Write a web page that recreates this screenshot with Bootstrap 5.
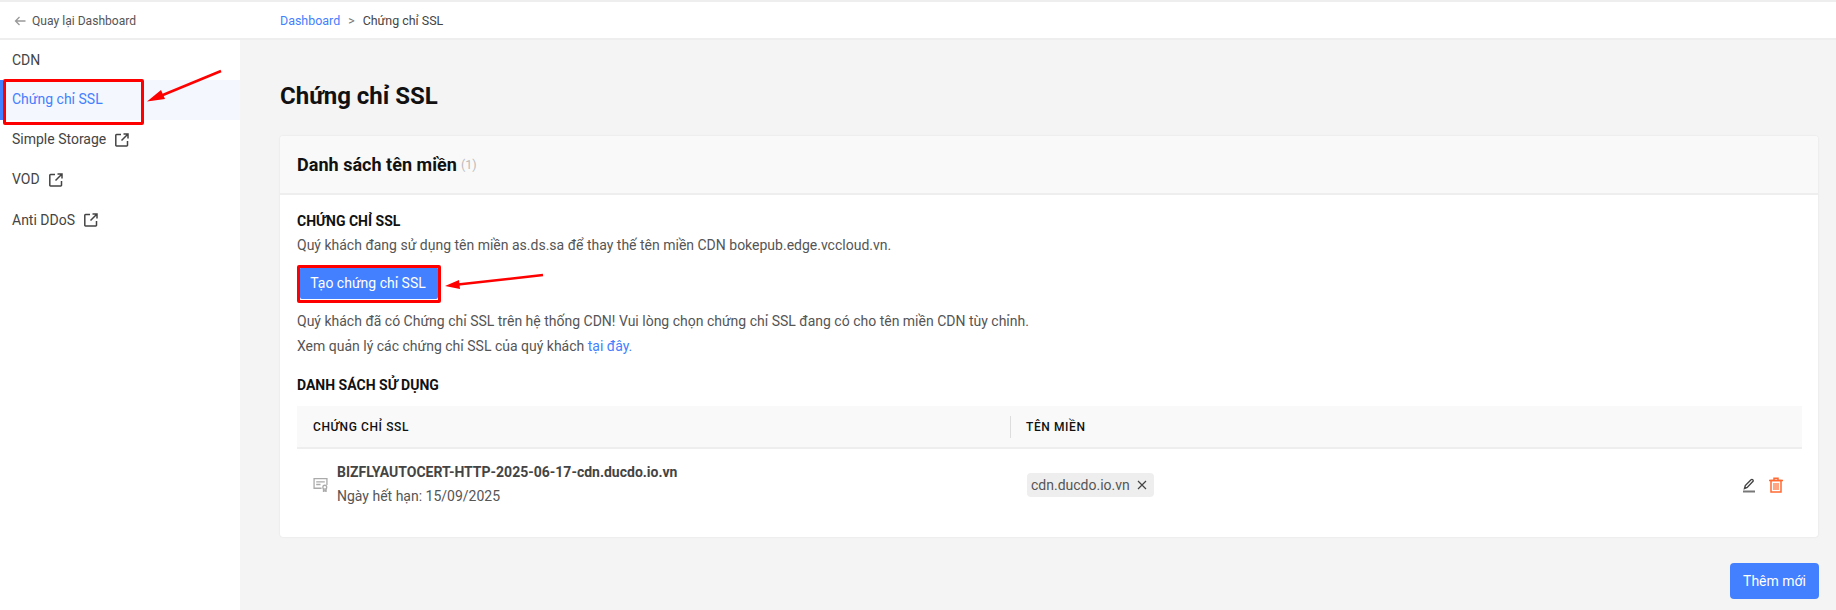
<!DOCTYPE html>
<html lang="vi">
<head>
<meta charset="utf-8">
<title>Chứng chỉ SSL</title>
<link href="https://cdn.jsdelivr.net/npm/bootstrap@5.3.0/dist/css/bootstrap.min.css" rel="stylesheet">
<style>
html,body{height:100%}
body{font-family:Roboto,"Liberation Sans",sans-serif;font-size:14px;color:#444;background:#f4f4f4;overflow:hidden;position:relative}
a{text-decoration:none;color:#4380ff}
.shell{height:610px;border-top:2px solid #eee}
.topbar{height:38px;background:#fff;border-bottom:2px solid #eee;padding-top:2px}
.back-link{width:280px;padding-left:14px;font-size:12.1px;gap:6px}
.crumbs{font-size:12.45px;color:#444;gap:8px}
.crumbs .sep{color:#777}
.side{width:240px;background:#fff;flex:none}
.side-item{height:40px;padding-left:12px;color:#444;font-size:14px;gap:9px}
.side-item.on{background:#f4f7fe;color:#4380ff;border-left:3px solid #4380ff;padding-left:9px}
.side-item span{margin-top:-1px}
.main{flex:1;padding:40px 18px 0 40px;min-width:0}
.page-title{font-size:24px;font-weight:700;color:#111;line-height:32px;margin:0 0 24px}
.panel{background:#fff;border-radius:3px;box-shadow:0 0 2px rgba(0,0,0,.1);height:401px}
.panel-head{height:59px;background:#f9f9f9;border-bottom:2px solid #eee;padding-left:17px;border-radius:3px 3px 0 0}
.panel-head b{font-size:18px;font-weight:700;color:#111;letter-spacing:.03px}
.panel-head span{font-size:12.5px;color:#bbb;margin-left:4px;margin-top:2px}
.panel-body{padding:16px 16px 0 17px}
.sec-title{font-size:14px;font-weight:700;color:#111;line-height:20px;text-transform:uppercase}
.sec-gap{margin-top:17px}
.line{line-height:24px;color:#555;font-size:14px}
.line-first{margin-top:2px}
.cta{background:#4380ff;color:#fff;font-size:14px;height:32px;padding:0 2px 0 0;border:0;border-radius:2px;margin:10px 0 10px 3px;line-height:32px;width:138px}
.cta-wrap{margin:0}
.line-last{margin-top:1px}
.tbl-head{height:43px;background:#f9f9f9;border-bottom:2px solid #eee;margin-top:11px;font-size:12px;font-weight:500;color:#111;letter-spacing:.6px}
.cell-a{width:713px;flex:none;padding-left:16px}
.cell-b{padding-left:15px;border-left:1px solid #ddd;height:22px}
.tbl-row{height:72px}
.cert-cell{width:714px;gap:6px;margin-top:-2px}
.cert-name{font-size:14px;font-weight:700;color:#444;line-height:24px}
.cert-date{line-height:24px;color:#555}
.tag-chip{height:24px;background:#eee;border-radius:4px;padding:0 7px 0 4px;color:#555;font-size:14px;gap:7px;margin-left:16px}
.row-acts{gap:13px;margin-right:19px}
.add-btn{background:#4380ff;color:#fff;width:89px;height:36px;border-radius:4px;font-size:14px;border:0;margin:26px -1px 0 auto;display:block;padding:0}
.mark-box{position:absolute;border:3px solid #f00;border-radius:2px;pointer-events:none}
.mark-a{left:3px;top:79px;width:141px;height:46px}
.mark-b{left:297px;top:265px;width:144px;height:38px}
.mark-svg{position:absolute;left:0;top:0;pointer-events:none}
</style>
</head>
<body>
<div class="shell d-flex flex-column">
  <div class="topbar d-flex align-items-center flex-none">
    <a class="back-link d-flex align-items-center" href="#">
      <svg width="12" height="12" viewBox="0 0 12 12" fill="none" stroke="#999" stroke-width="1.3"><path d="M11.500 6H1.500M5.500 2 1.500 6l4 4"/></svg>
      <span style="color:#555">Quay lại Dashboard</span>
    </a>
    <div class="crumbs d-flex align-items-center">
      <a href="#">Dashboard</a><span class="sep">&gt;</span><span>Chứng chỉ SSL</span>
    </div>
  </div>
  <div class="d-flex flex-grow-1">
    <nav class="side">
      <a class="side-item d-flex align-items-center" href="#">CDN</a>
      <a class="side-item on d-flex align-items-center" href="#"><span>Chứng chỉ SSL</span></a>
      <a class="side-item d-flex align-items-center" href="#"><span>Simple Storage</span>
        <svg width="14" height="14" viewBox="0 0 14 14" fill="none" stroke="#444" stroke-width="1.500"><path d="M6 1.500H1.500a.7.7 0 0 0-.7.7v10.100a.7.7 0 0 0 .7.7h10.300a.7.7 0 0 0 .7-.7V8M8.500 1H13v4.500M13 1 6.500 7.500"/></svg></a>
      <a class="side-item d-flex align-items-center" href="#"><span>VOD</span>
        <svg width="14" height="14" viewBox="0 0 14 14" fill="none" stroke="#444" stroke-width="1.500"><path d="M6 1.500H1.500a.7.7 0 0 0-.7.7v10.100a.7.7 0 0 0 .7.7h10.300a.7.7 0 0 0 .7-.7V8M8.500 1H13v4.500M13 1 6.500 7.500"/></svg></a>
      <a class="side-item d-flex align-items-center" href="#">Anti DDoS
        <svg width="14" height="14" viewBox="0 0 14 14" fill="none" stroke="#444" stroke-width="1.500"><path d="M6 1.500H1.500a.7.7 0 0 0-.7.7v10.100a.7.7 0 0 0 .7.7h10.300a.7.7 0 0 0 .7-.7V8M8.500 1H13v4.500M13 1 6.500 7.500"/></svg></a>
    </nav>
    <main class="main">
      <h1 class="page-title">Chứng chỉ SSL</h1>
      <section class="panel">
        <div class="panel-head d-flex align-items-center"><b>Danh sách tên miền</b><span>(1)</span></div>
        <div class="panel-body">
          <div class="sec-title">Chứng chỉ SSL</div>
          <div class="line line-first">Quý khách đang sử dụng tên miền as.ds.sa để thay thế tên miền CDN bokepub.edge.vccloud.vn.</div>
          <div class="cta-wrap"><button class="cta" type="button">Tạo chứng chỉ SSL</button></div>
          <div class="line">Quý khách đã có Chứng chỉ SSL trên hệ thống CDN! Vui lòng chọn chứng chỉ SSL đang có cho tên miền CDN tùy chỉnh.</div>
          <div class="line line-last">Xem quản lý các chứng chỉ SSL của quý khách <a href="#">tại đây.</a></div>
          <div class="sec-title sec-gap">Danh sách sử dụng</div>
          <div class="tbl-head d-flex align-items-center">
            <div class="cell-a">CHỨNG CHỈ SSL</div>
            <div class="cell-b d-flex align-items-center">TÊN MIỀN</div>
          </div>
          <div class="tbl-row d-flex align-items-center">
            <div class="cell-a cert-cell d-flex align-items-center">
              <svg width="15" height="15" viewBox="0 0 14 14" fill="none" stroke="#aaa" stroke-width="1.200"><path d="M8 10.500H1V1.500h12v6"/><path d="M3 4.500h8M3 7h4"/><circle cx="11" cy="9.500" r="1.800"/><path d="M9.800 11v2.500l1.200-.7 1.200.7V11"/></svg>
              <div style="margin-left:3px">
                <div class="cert-name">BIZFLYAUTOCERT-HTTP-2025-06-17-cdn.ducdo.io.vn</div>
                <div class="cert-date">Ngày hết hạn: 15/09/2025</div>
              </div>
            </div>
            <div class="tag-chip d-inline-flex align-items-center">cdn.ducdo.io.vn
              <svg width="10" height="10" viewBox="0 0 10 10" stroke="#444" stroke-width="1.200"><path d="M1 1l8 8M9 1 1 9"/></svg></div>
            <div class="row-acts ms-auto d-flex align-items-center">
              <svg width="14" height="15" viewBox="0 0 14 15" fill="none" stroke="#444" stroke-width="1.400"><path d="M2.500 10.500 3.300 7.500 9 1.800a1.200 1.200 0 0 1 1.800 0 1.200 1.200 0 0 1 0 1.800L5.200 9.500z"/><path d="M1 13.500h12" stroke="#777" stroke-width="2"/></svg>
              <svg width="14" height="16" viewBox="0 0 14 16" fill="none" stroke="#ff6a33" stroke-width="1.500"><path d="M0 3.500h14M5 3.500V1.200h4v2.300"/><path d="M2 3.500v11.500h10V3.500z"/><path d="M5 6v7M7 6v7M9 6v7" stroke-width="1.200"/></svg>
            </div>
          </div>
        </div>
      </section>
      <button class="add-btn" type="button">Thêm mới</button>
    </main>
  </div>
</div>
<div class="mark-box mark-a"></div>
<div class="mark-box mark-b"></div>
<svg class="mark-svg" width="1836" height="610" viewBox="0 0 1836 610" fill="none">
  <path d="M221 71 158 97" stroke="#f00" stroke-width="2.500"/>
  <path d="M147 101.500 161 90 165 99z" fill="#f00"/>
  <path d="M543 275 458 284.500" stroke="#f00" stroke-width="2.500"/>
  <path d="M445 286 459 280 460 289z" fill="#f00"/>
</svg>
<script src="https://cdn.jsdelivr.net/npm/bootstrap@5.3.0/dist/js/bootstrap.bundle.min.js"></script>
</body>
</html>
